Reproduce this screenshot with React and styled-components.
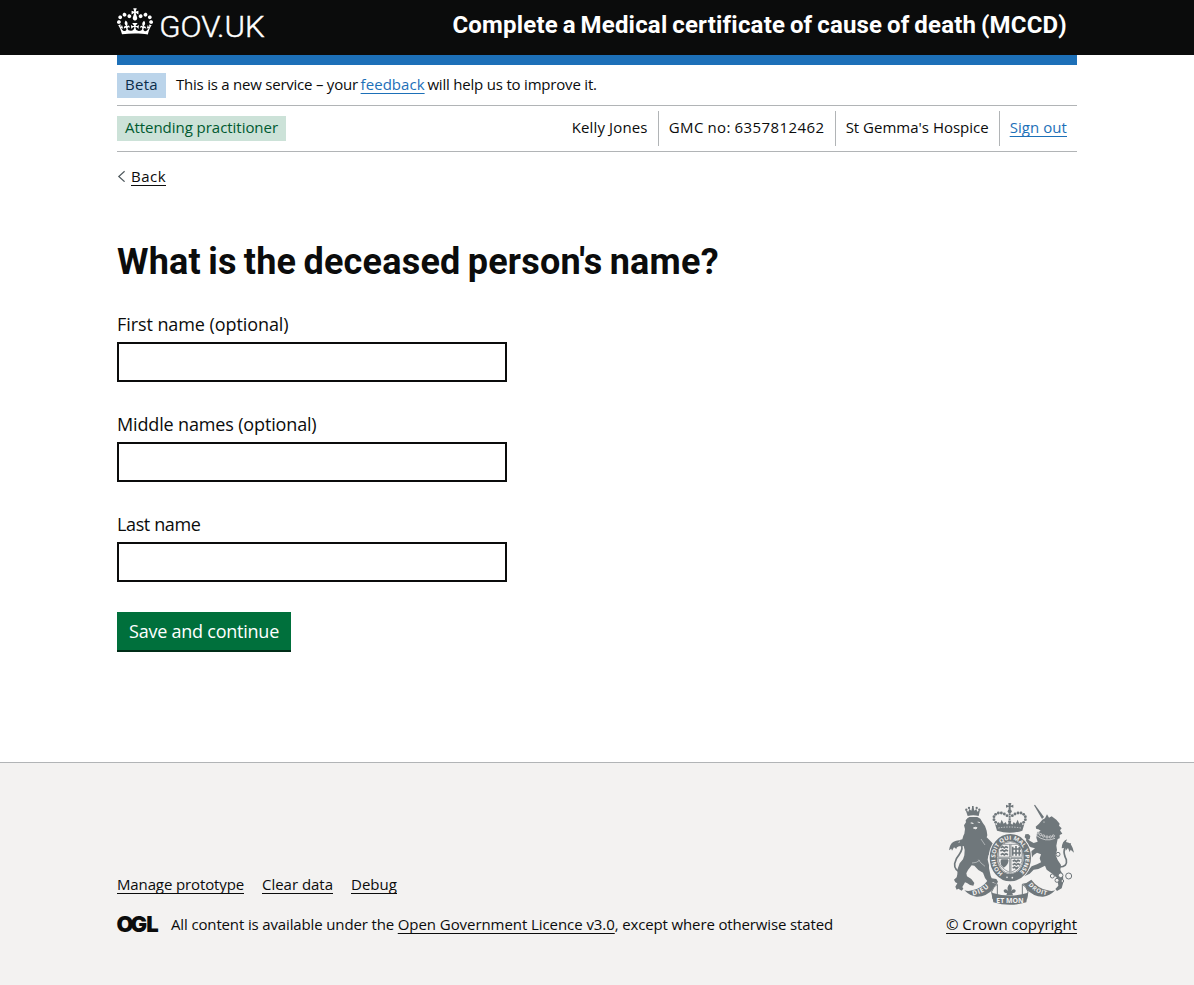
import React from 'react';
import styled, { createGlobalStyle } from 'styled-components';

const color = {
  ink: '#0b0c0c',
  blue: '#1d70b8',
  border: '#b1b4b6',
  footer: '#f3f2f1',
  crest: '#6f777b',
};

const GlobalStyle = createGlobalStyle`
  body {
    margin: 0;
    background: ${color.footer};
    color: ${color.ink};
    font-family: 'Open Sans', 'Noto Sans', sans-serif;
    font-size: 15px;
    line-height: 20px;
  }
  * { box-sizing: border-box; }
`;

const Page = styled.div`
  min-height: 985px;
  display: flex;
  flex-direction: column;
  background: #fff;
`;

const Container = styled.div`
  width: 960px;
  margin: 0 auto;
`;

const Text = styled.span`
  white-space: nowrap;
  letter-spacing: ${(p) => p.$track || 0}px;
  word-spacing: ${(p) => p.$word || 0}px;
`;

const Link = styled.a`
  white-space: nowrap;
  color: ${(p) => p.$color || color.ink};
  letter-spacing: ${(p) => p.$track || 0}px;
  text-decoration: underline;
  text-decoration-thickness: 1px;
  text-decoration-skip-ink: none;
  text-underline-offset: 3px;
`;

const Header = styled.header`
  height: 55px;
  background: ${color.ink};
  color: #fff;
`;

const HeaderInner = styled(Container)`
  display: flex;
  justify-content: space-between;
  padding-right: 10px;
`;

const Logo = styled.a`
  display: flex;
  gap: 7px;
  padding-top: 8px;
`;

const ServiceName = styled.div`
  font: 700 24px/50px Roboto, sans-serif;
  letter-spacing: 0.2px;
  word-spacing: -1.4px;
  white-space: nowrap;
`;

const BlueBar = styled(Container)`
  height: 10px;
  background: ${color.blue};
`;

const PhaseBanner = styled(Container)`
  display: flex;
  align-items: flex-start;
  gap: 10px;
  height: 41px;
  padding-top: 8px;
  border-bottom: 1px solid ${color.border};
`;

const Tag = styled.strong`
  width: ${(p) => p.$width}px;
  height: 25px;
  padding-left: 8px;
  font-weight: 400;
  line-height: 23px;
  letter-spacing: ${(p) => p.$track || 0}px;
  white-space: nowrap;
  background: ${(p) => p.$bg};
  color: ${(p) => p.$fg};
`;

const PhaseText = styled.div`
  display: flex;
  gap: 2.8px;
  line-height: 23px;
`;

const UserBar = styled(Container)`
  display: flex;
  align-items: center;
  justify-content: space-between;
  height: 46px;
  border-bottom: 1px solid ${color.border};
`;

const UserList = styled.ul`
  display: flex;
  margin: 0;
  padding: 0;
  list-style: none;
`;

const UserItem = styled.li`
  height: 35px;
  padding: 0 10px;
  line-height: 33px;
  border-right: ${(p) => (p.$last ? 'none' : `1px solid ${color.border}`)};
`;

const BackRow = styled(Container)`
  display: flex;
  align-items: center;
  gap: 5px;
  margin-top: 14px;
`;

const Main = styled.main`
  width: 960px;
  height: 576px;
  margin: 0 auto;
  padding-top: 56px;
`;

const Heading = styled.h1`
  margin: 0 0 30px;
  font: 700 36px/40px Roboto, sans-serif;
  letter-spacing: 0.22px;
  word-spacing: -2px;
`;

const Field = styled.div`
  display: flex;
  flex-direction: column;
  align-items: flex-start;
  gap: 5px;
  margin-bottom: 30px;
`;

const Label = styled.label`
  font-size: 18px;
  line-height: 25px;
  letter-spacing: ${(p) => p.$track}px;
`;

const Input = styled.input`
  width: 390px;
  height: 40px;
  padding: 5px;
  border: 2px solid ${color.ink};
  border-radius: 0;
  background: #fff;
`;

const Button = styled.button`
  display: block;
  width: 174px;
  height: 38px;
  padding: 0;
  border: 0;
  background: #00703c;
  box-shadow: 0 2px 0 #002d18;
  color: #fff;
  font: 400 18px/38px 'Open Sans', sans-serif;
  letter-spacing: -0.236px;
`;

const Footer = styled.footer`
  flex: 1;
  background: ${color.footer};
  border-top: 1px solid ${color.border};
`;

const FooterInner = styled(Container)`
  display: flex;
  justify-content: space-between;
  align-items: flex-end;
  padding-top: 40px;
`;

const FooterLinks = styled.div`
  display: flex;
  gap: 18px;
  margin-bottom: 20px;
`;

const Licence = styled.div`
  display: flex;
  align-items: center;
`;

const LicenceText = styled.div`
  display: flex;
  margin-left: 13px;
`;

const Copyright = styled.div`
  display: flex;
  flex-direction: column;
  align-items: flex-end;
  gap: 9px;
`;

const CrestSvg = styled.svg`
  display: block;
  margin-right: 3px;
`;

const LogoSvg = styled.svg`
  display: block;
  flex: none;
  overflow: visible;
`;

const Crown = () => (
  <LogoSvg width="36" height="27" viewBox="0 0 132 97" fill="#fff" aria-hidden="true">
    <path d="M25 30.2c3.5 1.5 7.7-.2 9.1-3.7 1.5-3.6-.2-7.8-3.9-9.2-3.6-1.4-7.6.3-9.1 3.9-1.4 3.5.3 7.5 3.9 9zM9 39.5c3.6 1.5 7.8-.2 9.2-3.7 1.5-3.6-.2-7.8-3.9-9.1-3.6-1.5-7.6.2-9.1 3.8-1.4 3.5.3 7.5 3.8 9zM4.4 57.2c3.5 1.5 7.7-.2 9.1-3.8 1.5-3.6-.2-7.7-3.9-9.1-3.5-1.5-7.6.3-9.1 3.8-1.4 3.5.3 7.6 3.9 9.1zm38.3-21.4c3.5 1.5 7.7-.2 9.1-3.8 1.5-3.6-.2-7.7-3.9-9.1-3.6-1.5-7.6.3-9.1 3.8-1.3 3.6.4 7.7 3.9 9.1zm64.4-5.6c-3.6 1.5-7.8-.2-9.1-3.7-1.5-3.6.2-7.8 3.8-9.2 3.6-1.4 7.7.3 9.2 3.9 1.3 3.5-.4 7.5-3.9 9zm15.9 9.3c-3.6 1.5-7.7-.2-9.1-3.7-1.5-3.6.2-7.8 3.7-9.1 3.6-1.5 7.7.2 9.2 3.8 1.5 3.5-.3 7.5-3.8 9zm4.7 17.7c-3.6 1.5-7.8-.2-9.2-3.8-1.5-3.6.2-7.7 3.9-9.1 3.6-1.5 7.7.3 9.2 3.8 1.3 3.5-.4 7.6-3.9 9.1zM89.3 35.8c-3.6 1.5-7.8-.2-9.2-3.8-1.4-3.6.2-7.7 3.9-9.1 3.6-1.5 7.7.3 9.2 3.8 1.4 3.6-.3 7.7-3.9 9.1zM69.7 17.7l8.9 4.7V9.3l-8.9 2.8c-.2-.3-.5-.6-.9-.9L72.4 0H59.6l3.5 11.2c-.3.3-.6.5-.9.9l-8.8-2.8v13.1l8.8-4.7c.3.3.6.7.9.9l-5 15.4v.1c-.2.8-.4 1.6-.4 2.4 0 4.1 3.1 7.5 7 8.1h.2c.3 0 .7.1 1 .1.4 0 .7 0 1-.1h.2c4-.6 7.1-4.1 7.1-8.1 0-.8-.1-1.7-.4-2.4V34l-5.1-15.4c.4-.2.7-.6 1-.9zM66 92.8c16.9 0 32.8 1.1 47.1 3.2 4-16.9 8.9-26.7 14-33.5l-9.6-3.4c1 4.9 1.1 7.2 0 10.2-1.5-1.4-3-4.3-4.2-8.7L108.6 76c2.8-2 5-3.2 7.5-3.3-4.4 9.4-10 11.9-13.6 11.2-4.3-.8-6.3-4.6-5.6-7.9 1-4.7 5.7-5.9 8-.5 4.3-8.7-3-11.4-7.6-8.8 7.1-7.2 7.9-13.5 2.1-21.1-8 6.1-8.1 12.3-4.5 20.8-4.7-5.4-12.1-2.5-9.5 6.2 3.4-5.2 7.9-2 7.2 3.1-.6 4.3-6.4 7.8-13.5 7.2-10.3-.9-10.9-8-11.2-13.8 2.5-.5 7.1 1.8 11 7.3L80.2 60c-4.1 4.4-8 5.3-12.3 5.4 1.4-4.4 8-11.6 8-11.6H55.5s6.4 7.2 7.9 11.6c-4.2-.1-8-1-12.3-5.4l1.4 16c3.9-5.5 8.5-7.7 10.9-7.3-.3 5.8-.9 12.8-11.1 13.8-7.2.6-12.9-2.9-13.5-7.2-.7-5 3.8-8.3 7.1-3.1 2.7-8.7-4.6-11.6-9.4-6.2 3.7-8.5 3.6-14.7-4.6-20.8-5.8 7.6-5 13.9 2.2 21.1-4.7-2.6-11.9.1-7.7 8.8 2.3-5.5 7.1-4.2 8.1.5.7 3.3-1.3 7.1-5.7 7.9-3.5.7-9-1.8-13.5-11.2 2.5.1 4.7 1.3 7.5 3.3l-4.7-15.4c-1.2 4.4-2.7 7.2-4.3 8.7-1.1-3-.9-5.3 0-10.2l-9.5 3.4c5 6.9 9.9 16.7 14 33.5 14.8-2.1 30.8-3.2 47.7-3.2z" />
  </LogoSvg>
);

const Wordmark = () => (
  <LogoSvg width="106" height="36" viewBox="0 0 106 36">
    <text x="-0.8" y="28.8" fill="#fff" stroke="#fff" strokeWidth="0.4" fontFamily="Roboto, sans-serif" fontWeight="300" fontSize="30" textLength="105.5" lengthAdjust="spacingAndGlyphs">
      GOV.UK
    </text>
  </LogoSvg>
);

const OglMark = () => (
  <LogoSvg width="41" height="18" viewBox="0 0 41 18">
    <text x="-0.6 13.6 29.2" y="16.8" fill={color.ink} fontFamily="Inter, sans-serif" fontWeight="900" fontSize="22">
      OGL
    </text>
  </LogoSvg>
);

const arch = [
  [190, 87], [182, 82], [177, 74], [177, 65], [182, 58], [190, 54], [199, 54], [208, 57], [216, 62],
  [258, 87], [266, 82], [271, 74], [271, 65], [266, 58], [258, 54], [249, 54], [240, 57], [232, 62],
];
const chain = [[369, 178, 6], [352, 243, 6], [366, 256, 6], [377, 241, 7], [401, 243, 9], [382, 258, 4]];
const collar = [[309, 114], [317, 119], [326, 123], [336, 126], [346, 126], [355, 123]];

const Crest = () => (
  <CrestSvg width="125" height="102" viewBox="42 24 375 306" fill={color.crest} stroke="none" aria-hidden="true">
    {/* Royal crown */}
    <path d="M220 24h9l-2 8 8-3v9l-8-3v9h-6v-9l-8 3v-9l8 3z" />
    <circle cx="224" cy="49" r="6" />
    <path d="M224 55v30" strokeWidth="6" stroke={color.crest} strokeDasharray="6 1.5" />
    {arch.map(([x, y]) => (
      <circle key={`${x}-${y}`} cx={x} cy={y} r="4.3" />
    ))}
    <path d="M186 107l-6-20 7 4 3-9 5 5 5-13 6 12 6-5 4 8 5-4-2-8h10l-2 8 5 4 4-8 6 5 6-12 5 13 5-5 3 9 7-4-6 20q-38 12-76 0z" />
    <path d="M190 99q34-6 68 0" stroke={color.footer} strokeWidth="2" fill="none" strokeDasharray="4 4" />

    {/* Lion */}
    <path d="M98 63l-6-18 8 5 3-8 6 5 2-9h5l2 9 6-5 3 8 8-5-4 18q-16-5-33 0z" />
    <path d="M111 33h5v7h-5z" />
    <circle cx="94" cy="44" r="3.5" />
    <circle cx="102" cy="39" r="3.5" />
    <circle cx="125" cy="39" r="3.5" />
    <circle cx="133" cy="44" r="3.5" />
    <path d="M97 70l6-4h24l9 5 4 7 4 7 6 8 5 14 2 14-2 6 9 9 8 8 4 5 2 14-10 6-8 13-2 12 4 16 0 10 5 22 3 8 14 2 5 8-4 7-10-5-16-1-9-12-6-16-14-8-12-13-8-1-11 14-5 10 2 9 13 8 9 12-3 8-10-2-9-6-6-2-8 14 3 5-5 6-10-6-5 3-4-9 6-10-6-3-4-8 8-7 2-9 1-17 6-16 10-12 4-12 1-16-3-12-14 1-9 4-4-6 8-10 6 1 3-9 6-1 3-11 3-6 2-14-3-11 6-9-1-6 4-5z" />
    <path d="M86 236q-30-8-27-30 3-16 14-28 13-20 5-28-14-10-26 4" fill="none" stroke={color.crest} strokeWidth="5" />
    <path d="M42 166q2-20 14-26 9-6 22-4l-9 7 9 6-12 4-2 9-7-5-6 10-2-6z" />
    <path d="M107 84q7-2 8 3M128 81l7 2M115 99q6-4 11-1l-3 4z" stroke={color.footer} strokeWidth="2.4" fill={color.footer} />
    <path d="M134 196q-9 8-23 8M150 214q-14-10-20-20M138 132l12 18" stroke={color.footer} strokeWidth="1.4" fill="none" />

    {/* Unicorn */}
    <path d="M300 29l27 37-6 6-24-41z" />
    <path d="M302 95L312 86 322 74 330 70 336 58 342 68 350 64 364 74 374 86 372 92 380 100 375 106 382 116 374 120 374 130 368 132 366 142 364 152 366 165 362 180 368 195 378 210 376 225 384 240 385 262 380 280 366 288 361 282 370 272 367 250 352 236 335 224 330 212 310 222 296 224 284 236 268 244 264 236 280 226 290 214 306 208 318 202 314 190 318 178 306 173 296 180 288 192 279 188 284 178 290 168 300 160 288 157 276 151 269 142 276 130 284 137 296 144 308 140 304 128 306 114 317 107 310 103 304 102z" />
    <path d="M276 134l-7-7 2-9 9-1 6 6-2 10z" />
    <path d="M374 216q24 0 20-22-9-18-6-31 6-17 20-16" fill="none" stroke={color.crest} strokeWidth="5" />
    <path d="M380 160q1-22 16-27l-3 8q18 1 24 32l-10-9-3 7-5-12-7 8-1-9z" />
    <path d="M304 121q26 22 56 9" fill="none" stroke={color.footer} strokeWidth="2" />
    {collar.map(([x, y]) => (
      <circle key={x} cx={x} cy={y} r="3.4" fill={color.crest} stroke={color.footer} strokeWidth="2" />
    ))}
    {chain.map(([x, y, r]) => (
      <circle key={`${x}-${y}`} cx={x} cy={y} r={r} fill={color.footer} stroke={color.crest} strokeWidth="3" />
    ))}
    <circle cx="327" cy="81" r="1.8" fill={color.footer} />

    {/* Scrolls */}
    <path d="M88 286q12 4 23 0 30-6 49-32l15 10 12 2q-8 4-12 16-22 24-50 23-20-2-37-19z" />
    <path d="M361 286q-12 4-23 0-30-6-49-32l-15 10-12 2q8 4 12 16 22 24 50 23 20-2 37-19z" />
    <path d="M187 268q-12 6-17 22l4 22 13-10zM262 268q12 6 17 22l-4 22-13-10z" fill={color.footer} stroke={color.crest} strokeWidth="3" />
    <path d="M170 293q55 17 109 0l-5 29q-50 15-99 0z" />
    <path id="dieuArc" d="M113 301q32-4 54-29" fill="none" />
    <path id="droitArc" d="M280 270q22 27 58 31" fill="none" />
    <g fill={color.footer} fontFamily="'Open Sans', sans-serif" fontWeight="700">
      <text fontSize="20"><textPath href="#dieuArc" textLength="56">DIEU</textPath></text>
      <text fontSize="18"><textPath href="#droitArc" textLength="64">DROIT</textPath></text>
      <text x="184" y="323" fontSize="21" textLength="82" lengthAdjust="spacingAndGlyphs">ET MON</text>
    </g>

    {/* Fleur between the scrolls */}
    <path d="M224 267q11 11 4 22 7-10 14-3 0 10-10 8l2 7h-20l2-7q-10 2-10-8 7-7 14 3-7-11 4-22z" />

    {/* Garter and shield */}
    <ellipse cx="226" cy="188" rx="65" ry="74" fill={color.footer} />
    <ellipse cx="226" cy="188" rx="51" ry="60" fill="none" stroke={color.crest} strokeWidth="22" />
    <path id="garterArc" d="M204 235A45 54 0 1 1 248 235" fill="none" />
    <text fill={color.footer} fontFamily="'Open Sans', sans-serif" fontWeight="700" fontSize="17">
      <textPath href="#garterArc" textLength="258" lengthAdjust="spacingAndGlyphs">HONI SOIT QUI MAL Y PENSE</textPath>
    </text>
    <ellipse cx="226" cy="188" rx="39" ry="48" fill={color.footer} stroke={color.crest} strokeWidth="2" />
    <path d="M191 163q6-10 14-15h42q8 5 14 15v36q-6 22-35 34-29-12-35-34z" fill={color.footer} stroke={color.crest} strokeWidth="2" />
    <path d="M226 148v84M191 188h70" stroke={color.crest} strokeWidth="6" />
    <path d="M226 148v84M191 188h70" stroke={color.footer} strokeWidth="1.5" />
    <path d="M197 158l6-3 5 4 5-4 6 3M196 168l7-3 5 4 5-4 6 3M197 179l6-3 5 4 5-4 6 3M233 155v27M243 153v29M253 156v26M232 162h26M232 174h26M233 199l6-3 5 4 5-4 6 3M233 209l6-3 5 4 5-4 6 3M233 219l6-3 5 4 5-4M200 195q-3 14 6 20 12-6 12-20M203 196v14M207 196v18M211 196v16M215 196v10M199 195h20" fill="none" stroke={color.crest} strokeWidth="5" />
    <circle cx="216" cy="247" r="2.5" fill={color.footer} />
    <circle cx="232" cy="248" r="2.5" fill={color.footer} />
  </CrestSvg>
);

export default function App() {
  return (
    <>
      <GlobalStyle />
      <Page>
        <Header>
          <HeaderInner>
            <Logo>
              <Crown />
              <Wordmark />
            </Logo>
            <ServiceName>Complete a Medical certificate of cause of death (MCCD)</ServiceName>
          </HeaderInner>
        </Header>
        <BlueBar />
        <PhaseBanner>
          <Tag $width={49} $track={0.3} $bg="#bbd4ea" $fg="#0c2d4a">Beta</Tag>
          <PhaseText>
            <Text $track={-0.23}>This is a new service – your</Text>
            <Link $color={color.blue} $track={0.043}>feedback</Link>
            <Text $track={-0.2}>will help us to improve it.</Text>
          </PhaseText>
        </PhaseBanner>
        <UserBar>
          <Tag $width={169} $track={-0.04} $bg="#cce2d8" $fg="#005a30">Attending practitioner</Tag>
          <UserList>
            <UserItem><Text $track={0.143}>Kelly Jones</Text></UserItem>
            <UserItem><Text $track={0.44} $word={-0.75}>GMC no: 6357812462</Text></UserItem>
            <UserItem><Text>St Gemma's Hospice</Text></UserItem>
            <UserItem $last><Link $color={color.blue} $track={0.06}>Sign out</Link></UserItem>
          </UserList>
        </UserBar>
        <BackRow>
          <svg width="9" height="12" viewBox="0 0 9 12" fill="none" stroke="#505a5f" strokeWidth="1.2">
            <path d="M7.6 1.3 L1.8 6.5 L7.6 11.7" />
          </svg>
          <Link $track={0.477}>Back</Link>
        </BackRow>
        <Main>
          <Heading>What is the deceased person's name?</Heading>
          <Field>
            <Label htmlFor="first" $track={-0.08}>First name (optional)</Label>
            <Input id="first" />
          </Field>
          <Field>
            <Label htmlFor="middle" $track={-0.15}>Middle names (optional)</Label>
            <Input id="middle" />
          </Field>
          <Field>
            <Label htmlFor="last" $track={-0.38}>Last name</Label>
            <Input id="last" />
          </Field>
          <Button>Save and continue</Button>
        </Main>
        <Footer>
          <FooterInner>
            <div>
              <FooterLinks>
                <Link $track={-0.125}>Manage prototype</Link>
                <Link $track={-0.022}>Clear data</Link>
                <Link $track={0.034}>Debug</Link>
              </FooterLinks>
              <Licence>
                <OglMark />
                <LicenceText>
                  <Text $track={-0.14}>All content is available under the&nbsp;</Text>
                  <Link $track={-0.065}>Open Government Licence v3.0</Link>
                  <Text $track={-0.14}>, except where otherwise stated</Text>
                </LicenceText>
              </Licence>
            </div>
            <Copyright>
              <Crest />
              <Link $track={-0.013}>© Crown copyright</Link>
            </Copyright>
          </FooterInner>
        </Footer>
      </Page>
    </>
  );
}
